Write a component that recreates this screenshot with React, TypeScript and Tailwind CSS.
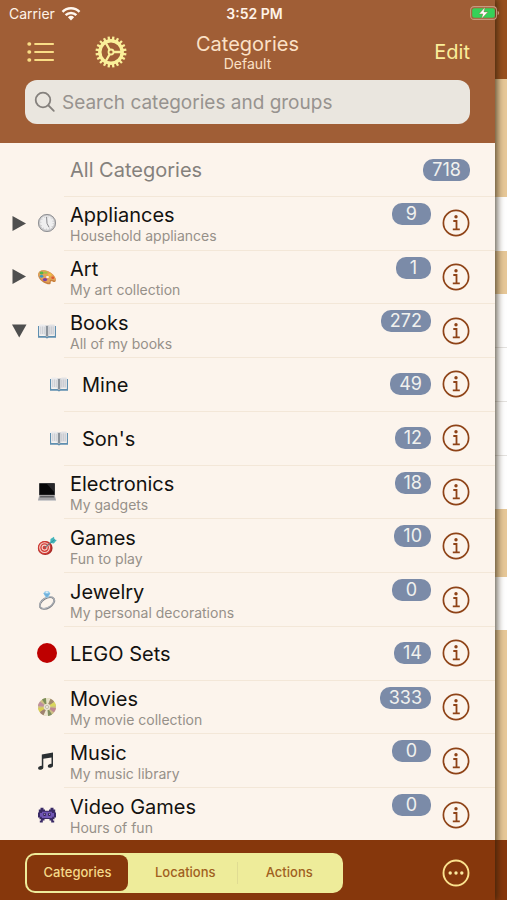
import { useState } from 'react';
import type { ReactNode } from 'react';

function ClockIcon() {
  return (
    <svg viewBox="0 0 20 20" className="size-5" aria-hidden="true">
      <circle cx="10" cy="10" r="9" fill="#c9c9cb" />
      <circle cx="10" cy="10" r="8.6" fill="none" stroke="#8c8c90" strokeWidth="0.9" />
      <circle cx="10" cy="9.8" r="7" fill="#efeff0" />
      <circle cx="10" cy="10" r="6.2" fill="none" stroke="#a9a9ad" strokeWidth="1" strokeDasharray="0.6 2.65" />
      <path d="M9.6 4.2 10 10.4 11.9 14" fill="none" stroke="#6d6d72" strokeWidth="0.8" strokeLinecap="round" />
    </svg>
  );
}

function PaletteIcon() {
  return (
    <svg viewBox="0 0 20 20" className="size-5" aria-hidden="true">
      <path d="M1.2 7C1.8 3.7 5.6 2.3 10 4c4.700 1.700 9 6 8.800 9.400-.2 1.700-1.700 2-3 1.300-1.300-.7-2.300-.4-2.100.8.2 1.600-1 2.200-3 1.700C5.600 15.800.4 11.500 1.200 7Z" fill="#c9803c" />
      <path d="M1.400 6.300C2.200 3.500 5.800 2.300 10 3.800c4.600 1.600 8.700 5.700 8.700 8.600-.4 1.300-1.700 1.400-2.900.7-1.700-.8-3.200-.3-3 1 .1 1.500-1 1.800-2.600 1.400C5.300 14.200.7 10.300 1.400 6.300Z" fill="#e3a25a" />
      <ellipse cx="4.600" cy="6" rx="2" ry="1.400" fill="#58b547" />
      <ellipse cx="8.700" cy="5.600" rx="1.900" ry="1.200" fill="#a3c53e" />
      <ellipse cx="12.700" cy="7.700" rx="1.800" ry="1.200" fill="#f1c53a" />
      <ellipse cx="15.800" cy="10.700" rx="1.500" ry="1.200" fill="#df5a2e" />
      <ellipse cx="4.500" cy="9.300" rx="1.800" ry="1.400" fill="#3898c9" />
      <ellipse cx="8" cy="12.600" rx="2.200" ry="1.600" fill="#7b3fa3" />
      <ellipse cx="10.500" cy="10" rx="1.500" ry="1" fill="#fcf4ec" />
    </svg>
  );
}

function BookIcon() {
  return (
    <svg viewBox="0 0 20 20" className="size-5" aria-hidden="true">
      <path d="M1 5h1.200v10H8.600l1.400.9 1.400-.9h6.400V5H19v11.700h-7.500l-1.500.7-1.500-.7H1Z" fill="#5f8fb0" />
      <path d="M2.200 3.800c2.800-.7 5.800-.4 7.600 1v10.700c-1.800-1.200-4.800-1.500-7.600-.9Z" fill="#ececee" />
      <path d="M17.800 3.800c-2.800-.7-5.800-.4-7.600 1v10.700c1.800-1.200 4.800-1.500 7.600-.9Z" fill="#e1e1e4" />
      <path d="M8.700 4.300c.5.200.9.500 1.300.8.400-.3.800-.6 1.300-.8v10.400l-1.300.9-1.300-.9Z" fill="#a9aeb5" />
      <path d="M10 5v10.800" stroke="#555f69" strokeWidth="0.700" />
      <path d="M3.800 5.500v7.600M5.600 5.400v7.600M7.300 5.700v7.600M12.700 5.700v7.600M14.400 5.400v7.600M16.200 5.500v7.600" stroke="#bfc2c8" strokeWidth="0.700" />
    </svg>
  );
}

function LaptopIcon() {
  return (
    <svg viewBox="0 0 20 20" className="size-5" aria-hidden="true">
      <rect x="2" y="1" width="16" height="12.500" rx="0.800" fill="#3e3e40" />
      <rect x="2.900" y="1.900" width="14.200" height="10.700" fill="#070708" />
      <path d="m10 1.900 7.100 0v8Z" fill="#27272a" />
      <path d="M2.200 13.500h15.600l1.200 4.700H1Z" fill="#a4a4a7" />
      <path d="M3.300 14h13.400l.4 1.600H2.900Z" fill="#5e5e61" />
      <path d="M1 18h18v.8H1Z" fill="#c9c9cb" />
    </svg>
  );
}

function DartIcon() {
  return (
    <svg viewBox="0 0 20 20" className="size-5" aria-hidden="true">
      <ellipse cx="8.200" cy="12" rx="7.400" ry="7" fill="#a92b28" />
      <circle cx="7.600" cy="11.600" r="6.600" fill="#d43c36" />
      <circle cx="7.600" cy="11.600" r="4.900" fill="none" stroke="#f3d4cc" strokeWidth="1.100" />
      <circle cx="7.600" cy="11.600" r="2.500" fill="none" stroke="#f3d4cc" strokeWidth="1.100" />
      <path d="m8 11.400 7-5.800" stroke="#66757d" strokeWidth="1.100" strokeLinecap="round" />
      <path d="m13.200 7 .3-4L17 .8l.5 2.700 2.300.6-3 3.300Z" fill="#43b5bb" />
      <path d="m14 6.500 4-3.100" stroke="#227f8b" strokeWidth="0.600" />
    </svg>
  );
}

function RingIcon() {
  return (
    <svg viewBox="0 0 20 20" className="size-5" aria-hidden="true">
      <ellipse cx="10" cy="13" rx="8" ry="4.800" transform="rotate(-32 10 13)" fill="none" stroke="#7b7f86" strokeWidth="1.900" />
      <ellipse cx="10" cy="12.600" rx="8" ry="4.800" transform="rotate(-32 10 12.600)" fill="none" stroke="#c6c9ce" strokeWidth="0.800" />
      <path d="M6.400 3.200 8 1.200h3.800l1.500 2-1.800 4.200H8.600Z" fill="#9ccfec" />
      <path d="m6.400 3.200 3.500 4.200 3.400-4.200Z" fill="#6fb1dc" />
      <path d="m8.300 3.200 1.600-2 1.600 2Z" fill="#dff2fc" />
    </svg>
  );
}

function RedDotIcon() {
  return (
    <svg viewBox="0 0 20 20" className="size-5" aria-hidden="true">
      <circle cx="10" cy="10" r="10" fill="#be0000" />
    </svg>
  );
}

function DiscIcon() {
  return (
    <svg viewBox="0 0 20 20" className="size-5" aria-hidden="true">
      <circle cx="10" cy="10" r="9" fill="#cdbf85" />
      <path d="M10 10 5 2.500A9 9 0 0 1 9 1Z" fill="#7d8f5a" />
      <path d="M10 10 9 1a9 9 0 0 1 4.500.7Z" fill="#e9e3cb" />
      <path d="M10 10 13.500 1.700A9 9 0 0 1 17.300 5Z" fill="#a08a6e" />
      <path d="m10 10 7.300-5a9 9 0 0 1 1.700 4Z" fill="#d9d75e" />
      <path d="m10 10 9 1a9 9 0 0 1-2 4.500Z" fill="#bf8793" />
      <path d="m10 10 5 7.500a9 9 0 0 1-4 1.500Z" fill="#7f8e62" />
      <path d="m10 10 1 9a9 9 0 0 1-4.500-.7Z" fill="#ece7d4" />
      <path d="m10 10-3.500 8.300A9 9 0 0 1 2.700 15Z" fill="#9f8272" />
      <path d="m10 10-7.300 5A9 9 0 0 1 1 11Z" fill="#d9cf54" />
      <path d="M10 10 1 9a9 9 0 0 1 2-4.500Z" fill="#c08fa0" />
      <circle cx="10" cy="10" r="3.300" fill="#e9e2cf" />
      <circle cx="10" cy="10" r="1.500" fill="#fcf4ec" stroke="#9f9a87" strokeWidth="0.600" />
    </svg>
  );
}

function MusicIcon() {
  return (
    <svg viewBox="0 0 20 20" className="size-5" aria-hidden="true">
      <path d="M4.800 3.500 16 1.500v12.700h-1.500V6.400L6.300 7.800v8.400H4.800Z" fill="#2b3033" />
      <ellipse cx="3.700" cy="16.800" rx="2.700" ry="1.900" transform="rotate(-14 3.700 16.800)" fill="#2b3033" />
      <ellipse cx="13.400" cy="14.800" rx="2.700" ry="1.900" transform="rotate(-14 13.400 14.800)" fill="#2b3033" />
    </svg>
  );
}

function AlienIcon() {
  return (
    <svg viewBox="0 0 20 20" className="size-5" aria-hidden="true">
      <path
        d="M3.500 2.800h3v1.700H8v1.300h4V4.500h1.500V2.800h3v1.700h1.700v3H19v5h-1.500v1.700H16v1.300h1.200v2h-3v-2h-1.700V14h-5v1.500H5.800v2h-3v-2H4v-1.300H2.500v-1.700H1v-5h.8v-3h1.700Z"
        fill="#3a2a66"
      />
      <path d="M5 6.800h10V8h2v3.800h-1.800V13H4.800v-1.200H3V8h2Z" fill="#6f55b4" />
      <path d="M6.500 8.300h2.200v2.400H6.500Zm4.800 0h2.200v2.400h-2.200Z" fill="#1f1538" />
      <path d="M7.200 8.800h.9v1h-.9Zm4.800 0h.9v1H12Z" fill="#e6dcf7" />
    </svg>
  );
}

function InfoIcon() {
  return (
    <svg viewBox="0 0 28 28" className="size-7" fill="none" stroke="#8e4317" aria-hidden="true">
      <circle cx="14" cy="14" r="12.600" strokeWidth="1.700" />
      <path d="M11.300 12h3.200v8.200M10.800 20.400h7" strokeWidth="1.800" />
      <circle cx="14" cy="7.700" r="1.700" fill="#8e4317" stroke="none" />
    </svg>
  );
}

const TEETH = Array.from({ length: 20 }, (_, i) => i * 18);

function GearIcon() {
  return (
    <svg viewBox="0 0 32 32" className="size-8" fill="none" stroke="#faf09a" aria-hidden="true">
      {TEETH.map((angle) => (
        <path key={angle} d="M16 4V.5" strokeWidth="2.300" transform={`rotate(${angle + 9} 16 16)`} />
      ))}
      <circle cx="16" cy="16" r="11.200" strokeWidth="3.400" />
      <circle cx="16" cy="16" r="2.500" strokeWidth="1.800" />
      <path d="M18.500 16h8M14.700 13.800l-4-7M14.700 18.200l-4 7" strokeWidth="2.300" />
    </svg>
  );
}

function ListIcon() {
  return (
    <svg viewBox="0 0 28 22" className="h-[22px] w-7" stroke="#f9dd86" strokeWidth="2.200" strokeLinecap="round" aria-hidden="true">
      <path d="M8.200 3H26M8.200 11H26M8.200 19H26" />
      <path d="M2 3h.6M2 11h.6M2 19h.6" strokeWidth="3.400" />
    </svg>
  );
}

function StatusBar() {
  return (
    <div className="absolute inset-x-0 top-0 z-20 grid h-[26px] grid-cols-3 items-center pl-[9px] pr-[7px] text-[14px] text-[#fff3e8]">
      <div className="flex items-center gap-1.5">
        <span>Carrier</span>
        <svg viewBox="0 0 20 15" className="h-[15px] w-5" fill="none" stroke="#fff7ef" strokeWidth="2.500" aria-label="Wi-Fi">
          <path d="M1.500 5.800a12 12 0 0 1 17 0M4.600 9.100a7.700 7.700 0 0 1 10.800 0" />
          <path d="m10 14.500-3.100-3.300a4.500 4.500 0 0 1 6.200 0Z" fill="#fff7ef" stroke="none" />
        </svg>
      </div>
      <span className="text-center font-semibold">3:52 PM</span>
      <svg viewBox="0 0 30 14" className="h-3.5 w-[30px] justify-self-end" aria-label="Battery charging">
        <rect x="0.600" y="0.600" width="25.800" height="12.800" rx="3.500" fill="none" stroke="#c59a80" strokeWidth="1.100" />
        <rect x="2.200" y="2.200" width="22.600" height="9.600" rx="2" fill="#35d158" />
        <path d="M27.700 4.800c1.900.8 1.900 3.600 0 4.400Z" fill="#c59a80" />
        <path d="M15 1.200 9 7.900h3.900L11.500 12.800l6.400-6.900h-4Z" fill="#fff" stroke="#a05e36" strokeWidth="0.400" />
      </svg>
    </div>
  );
}

type Category = {
  name: string;
  note?: string;
  count: number;
  icon: ReactNode;
  child?: boolean;
  disclosure?: 'open' | 'closed';
};

const CATEGORIES: Category[] = [
  { name: 'Appliances', note: 'Household appliances', count: 9, icon: <ClockIcon />, disclosure: 'closed' },
  { name: 'Art', note: 'My art collection', count: 1, icon: <PaletteIcon />, disclosure: 'closed' },
  { name: 'Books', note: 'All of my books', count: 272, icon: <BookIcon />, disclosure: 'open' },
  { name: 'Mine', count: 49, icon: <BookIcon />, child: true },
  { name: "Son's", count: 12, icon: <BookIcon />, child: true },
  { name: 'Electronics', note: 'My gadgets', count: 18, icon: <LaptopIcon /> },
  { name: 'Games', note: 'Fun to play', count: 10, icon: <DartIcon /> },
  { name: 'Jewelry', note: 'My personal decorations', count: 0, icon: <RingIcon /> },
  { name: 'LEGO Sets', count: 14, icon: <RedDotIcon /> },
  { name: 'Movies', note: 'My movie collection', count: 333, icon: <DiscIcon /> },
  { name: 'Music', note: 'My music library', count: 0, icon: <MusicIcon /> },
  { name: 'Video Games', note: 'Hours of fun', count: 0, icon: <AlienIcon /> },
];

function CountBadge({ value, raised = false }: { value: number; raised?: boolean }) {
  return (
    <span
      className={`h-[22px] shrink-0 rounded-[10px] bg-[#7b8ba8] text-center text-[18px] leading-[22px] text-[#f1f1ee] ${
        value < 10 ? 'px-3.5' : 'px-[9px]'
      } ${raised ? 'mt-1.5 self-start' : ''}`}
    >
      {value}
    </span>
  );
}

function CategoryRow({ category }: { category: Category }) {
  const { name, note, count, icon, child, disclosure } = category;
  return (
    <li className="flex min-h-0 flex-col">
      <div className={`flex min-h-0 flex-1 items-center pr-[25px] ${child ? 'pl-6' : 'pl-3'}`}>
        <div className="flex w-[15px] shrink-0">
          {disclosure && (
            <button type="button" aria-label={`Toggle ${name}`} aria-expanded={disclosure === 'open'}>
              <svg viewBox="0 0 15 17" className="h-[17px] w-[15px]" fill="#4f4f4f" aria-hidden="true">
                {disclosure === 'open' ? <path d="M0 2.500h14.500L7.200 15.500Z" /> : <path d="M.5 1 14 8.500.5 16Z" />}
              </svg>
            </button>
          )}
        </div>
        <div className="ml-2.5 mr-[13px] shrink-0">{icon}</div>
        <div className="min-w-0 flex-1 pt-0.5">
          <div className="text-[20px] leading-6 text-[#131210]">{name}</div>
          {note && <div className="text-[14px] leading-[18px] text-[#969089]">{note}</div>}
        </div>
        <CountBadge value={count} raised={Boolean(note)} />
        <button type="button" aria-label={`About ${name}`} className="ml-[11px] shrink-0">
          <InfoIcon />
        </button>
      </div>
      <div className="ml-16 h-px bg-[#f3e7d8]" />
    </li>
  );
}

const SEGMENTS = ['Categories', 'Locations', 'Actions'];

function Toolbar() {
  const [active, setActive] = useState('Categories');
  return (
    <footer className="flex h-[60px] shrink-0 items-center justify-between bg-[#86370c] px-[25px] pt-1.5">
      <div className="grid h-10 w-[318px] grid-cols-[auto_1fr_1fr] items-center rounded-[10px] bg-[#eeec9a] p-0.5">
        {SEGMENTS.map((segment) => (
          <button
            key={segment}
            type="button"
            aria-pressed={segment === active}
            onClick={() => setActive(segment)}
            className={`text-[13px] font-medium ${segment === 'Categories' ? 'mr-1.5 w-[101px]' : ''} ${
              segment === active
                ? 'h-9 rounded-[8px] bg-[#86370c] text-[#f5d98a]'
                : segment === 'Locations'
                  ? 'h-[22px] border-r border-[#e0dc93] text-[#a0601e]'
                  : 'h-[22px] text-[#a0601e]'
            }`}
          >
            {segment}
          </button>
        ))}
      </div>
      <button type="button" aria-label="More">
        <svg viewBox="0 0 28 28" className="size-7" fill="#fbe9a0" aria-hidden="true">
          <circle cx="14" cy="14" r="12.500" fill="none" stroke="#fbe28e" strokeWidth="1.900" />
          <circle cx="8.200" cy="14" r="1.700" />
          <circle cx="14" cy="14" r="1.700" />
          <circle cx="19.800" cy="14" r="1.700" />
        </svg>
      </button>
    </footer>
  );
}

function DetailEdge() {
  return (
    <aside className="flex w-3 shrink-0 flex-col bg-white" aria-hidden="true">
      <div className="h-[79px] bg-[#98501f]" />
      <div className="h-[118px] bg-[#e7c898]" />
      <div className="h-[54px]" />
      <div className="h-[43px] bg-[#e7c898]" />
      <div className="h-[54px] border-b border-[#e4e2df]" />
      <div className="h-[54px] border-b border-[#e4e2df]" />
      <div className="h-[54px] border-b border-[#e4e2df]" />
      <div className="h-[53px]" />
      <div className="h-[68px] bg-[#e7c898]" />
      <div className="h-[53px]" />
      <div className="flex-1 bg-[#e7c898]" />
      <div className="h-[60px] bg-[#86370c]" />
    </aside>
  );
}

export default function App() {
  return (
    <div className="relative flex h-screen overflow-hidden font-['Inter','Liberation_Sans',sans-serif]">
      <StatusBar />
      <div className="z-10 flex min-w-0 flex-1 flex-col bg-[#fcf4ec] shadow-[1px_0_7px_1px_rgba(40,30,10,0.75)]">
        <header className="flex h-[143px] shrink-0 flex-col bg-[#a05e36] px-[25px] pt-6">
          <div className="grid h-14 grid-cols-[1fr_auto_1fr] items-center">
            <div className="flex items-center gap-10 pl-0.5">
              <button type="button" aria-label="Menu">
                <ListIcon />
              </button>
              <button type="button" aria-label="Settings">
                <GearIcon />
              </button>
            </div>
            <div className="pt-0.5 text-center text-[#fbe1c6]">
              <h1 className="text-[20px] leading-[22px]">Categories</h1>
              <p className="text-[14px] leading-[18px]">Default</p>
            </div>
            <button type="button" className="justify-self-end text-[20px] text-[#fbee9a]">
              Edit
            </button>
          </div>
          <label className="flex h-11 items-center rounded-[12px] bg-[#eae6df] pl-[9px]">
            <svg viewBox="0 0 22 22" className="size-[22px] shrink-0" fill="none" stroke="#85817d" strokeWidth="1.800" strokeLinecap="round" aria-hidden="true">
              <circle cx="9" cy="9" r="7.300" />
              <path d="m14.500 14.500 5.300 5.300" />
            </svg>
            <input
              type="search"
              aria-label="Search categories and groups"
              placeholder="Search categories and groups"
              className="ml-1.5 min-w-0 flex-1 bg-transparent pt-0.5 text-[19px] outline-none placeholder:text-[#97938f]"
            />
          </label>
        </header>
        <main className="min-h-0 flex-1 overflow-hidden">
          <ul className="grid h-[calc(100%+2px)] auto-rows-fr">
            <li className="flex min-h-0 flex-col">
              <div className="flex flex-1 items-center justify-between pl-[70px] pr-[25px] pt-0.5">
                <span className="text-[20px] leading-6 text-[#85817c]">All Categories</span>
                <CountBadge value={718} />
              </div>
              <div className="ml-16 h-px bg-[#f3e7d8]" />
            </li>
            {CATEGORIES.map((category) => (
              <CategoryRow key={category.name} category={category} />
            ))}
          </ul>
        </main>
        <Toolbar />
      </div>
      <DetailEdge />
    </div>
  );
}
